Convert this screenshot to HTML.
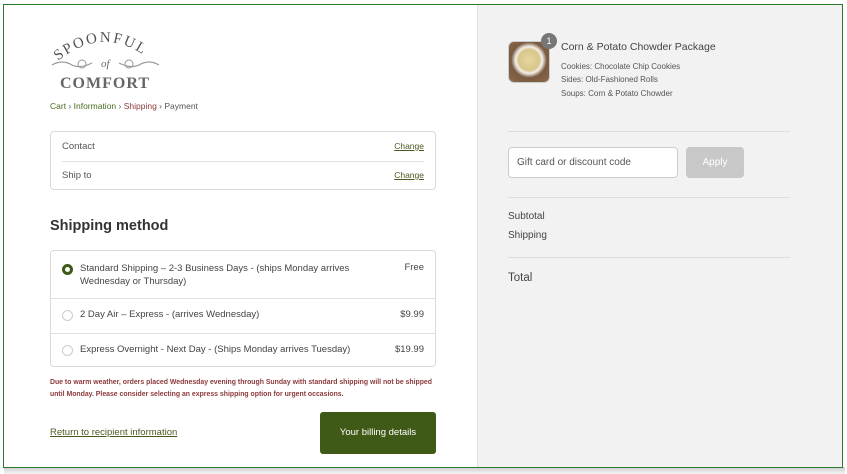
<!DOCTYPE html>
<html><head><style>
*{box-sizing:border-box;margin:0;padding:0}
body{width:847px;height:474px;background:#fff;font-family:"Liberation Sans",sans-serif;color:#333;position:relative;overflow:hidden}
.shadow{position:absolute;left:4px;top:467px;width:841px;height:7px;background:linear-gradient(#ccc,#f4f4f4)}
.frame{position:absolute;left:3px;top:4px;width:840px;height:464px;border:1.5px solid #2a7a2a;overflow:hidden;background:#fff}
.right{position:absolute;left:473px;top:0;right:0;bottom:0;background:#f2f2f2;border-left:1px solid #e2e2e2}
.a{position:absolute}
.sm{font-size:9px}
.box{position:absolute;border:1px solid #d9d9d9;border-radius:4px;background:#fff}
.row{position:absolute;left:0;right:0;border-top:1px solid #e0e0e0}
.radio{position:absolute;width:11px;height:11px;border-radius:50%;border:1px solid #ccc;background:#fff}
</style></head><body>
<div class="shadow"></div>
<div class="frame">
<div class="right">
 <div class="a" style="left:30px;top:36px;width:42px;height:42px;border-radius:6px;background:radial-gradient(circle at 50% 45%,#e6d7a0 0,#d9c58a 35%,#f2f0ea 45%,#7a5a40 60%,#8b6a4b 100%);border:1px solid #ccc"></div>
 <div class="a" style="left:63px;top:28px;width:16px;height:16px;border-radius:50%;background:#777;color:#fff;font-size:9px;text-align:center;line-height:16px">1</div>
 <div class="a" style="left:83px;top:36px;font-size:10.5px;color:#444">Corn &amp; Potato Chowder Package</div>
 <div class="a sm" style="left:83px;top:55px;font-size:8px;color:#555;line-height:13.3px">Cookies: Chocolate Chip Cookies<br>Sides: Old-Fashioned Rolls<br>Soups: Corn &amp; Potato Chowder</div>
 <div class="a" style="left:30px;top:126px;width:282px;border-top:1px solid #ddd"></div>
 <div class="a" style="left:30px;top:142px;width:170px;height:31px;border:1px solid #ccc;border-radius:4px;background:#fff;font-size:10px;color:#555;padding:9px 8px">Gift card or discount code</div>
 <div class="a" style="left:208px;top:142px;width:58px;height:31px;border-radius:4px;background:#c8c8c8;color:#fff;font-size:10px;text-align:center;line-height:31px">Apply</div>
 <div class="a" style="left:30px;top:192px;width:282px;border-top:1px solid #ddd"></div>
 <div class="a" style="left:30px;top:206px;font-size:10px;color:#444">Subtotal</div>
 <div class="a" style="left:30px;top:225px;font-size:10px;color:#444">Shipping</div>
 <div class="a" style="left:30px;top:252px;width:282px;border-top:1px solid #ddd"></div>
 <div class="a" style="left:30px;top:267px;font-size:11.5px;color:#444">Total</div>
</div>

<div class="a" style="left:44px;top:24px;width:115px;height:62px">
 <svg width="115" height="62" viewBox="0 0 115 62">
  <defs><path id="arc" d="M10,32 Q57,-6 104,32"/></defs>
  <text font-family="Liberation Serif,serif" font-size="15" fill="#555" letter-spacing="2"><textPath href="#arc">SPOONFUL</textPath></text>
  <text x="53" y="38" font-family="Liberation Serif,serif" font-size="11" fill="#666" font-style="italic">of</text>
  <path d="M4,36 q10,-6 20,0 q8,4 20,-2 M71,34 q12,6 20,2 q10,-6 20,0" stroke="#999" fill="none" stroke-width="1.2"/>
  <circle cx="34" cy="35" r="4" stroke="#999" fill="none"/><circle cx="81" cy="35" r="4" stroke="#999" fill="none"/>
  <text x="12" y="59" font-family="Liberation Serif,serif" font-weight="bold" font-size="16" fill="#666" letter-spacing="1">COMFORT</text>
 </svg>
</div>
<div class="a" style="left:46px;top:96px;font-size:8.5px;color:#555"><span style="color:#4a6b22">Cart</span> › <span style="color:#4a6b22">Information</span> › <span style="color:#8b3a3a">Shipping</span> › Payment</div>

<div class="box" style="left:46px;top:126px;width:386px;height:59px">
 <div class="a" style="left:11px;top:9px;font-size:9.5px;color:#555">Contact</div>
 <div class="a" style="right:11px;top:9px;font-size:8.5px;color:#4a5a22;text-decoration:underline">Change</div>
 <div class="a" style="left:11px;right:11px;top:29px;border-top:1px solid #e3e3e3"></div>
 <div class="a" style="left:11px;top:38px;font-size:9.5px;color:#555">Ship to</div>
 <div class="a" style="right:11px;top:38px;font-size:8.5px;color:#4a5a22;text-decoration:underline">Change</div>
</div>

<div class="a" style="left:46px;top:213px;font-size:14.5px;font-weight:bold;color:#333">Shipping method</div>

<div class="box" style="left:46px;top:245px;width:386px;height:117px">
 <div class="radio" style="left:11px;top:13px;border:3px solid #3f5a16;background:#fff"></div>
 <div class="a" style="left:29px;top:11px;font-size:9.5px;color:#444;line-height:13px;width:300px">Standard Shipping – 2-3 Business Days - (ships Monday arrives Wednesday or Thursday)</div>
 <div class="a" style="right:11px;top:11px;font-size:9.5px;color:#444">Free</div>
 <div class="row" style="top:47px"></div>
 <div class="radio" style="left:11px;top:59px"></div>
 <div class="a" style="left:29px;top:58px;font-size:9.5px;color:#444">2 Day Air – Express - (arrives Wednesday)</div>
 <div class="a" style="right:11px;top:58px;font-size:9.5px;color:#444">$9.99</div>
 <div class="row" style="top:82px"></div>
 <div class="radio" style="left:11px;top:94px"></div>
 <div class="a" style="left:29px;top:93px;font-size:9.5px;color:#444">Express Overnight - Next Day - (Ships Monday arrives Tuesday)</div>
 <div class="a" style="right:11px;top:93px;font-size:9.5px;color:#444">$19.99</div>
</div>

<div class="a" style="left:46px;top:372px;font-size:6.9px;font-weight:bold;color:#8b3a3a;line-height:12px;width:384px">Due to warm weather, orders placed Wednesday evening through Sunday with standard shipping will not be shipped until Monday. Please consider selecting an express shipping option for urgent occasions.</div>

<div class="a" style="left:46px;top:422px;font-size:9.5px;color:#4a5a22;text-decoration:underline">Return to recipient information</div>
<div class="a" style="left:316px;top:407px;width:116px;height:42px;background:#3f5a16;border-radius:3px;color:#fff;font-size:9.5px;text-align:center;line-height:42px">Your billing details</div>
</div>
</body></html>
